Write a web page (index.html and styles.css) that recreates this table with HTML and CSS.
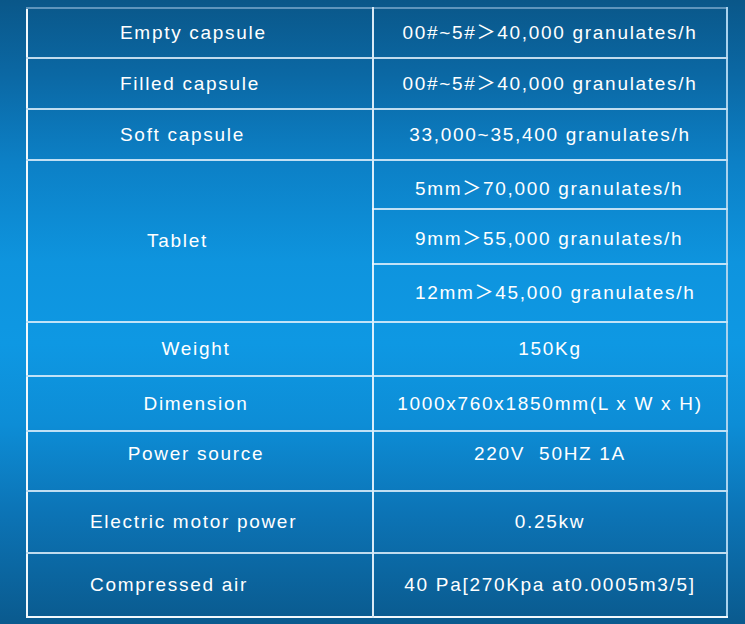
FILE: index.html
```html
<!DOCTYPE html>
<html>
<head>
<meta charset="utf-8">
<link rel="stylesheet" href="styles.css">
</head>
<body>
<table class="spec">
  <colgroup><col class="c1"><col class="c2"></colgroup>
  <tr class="r1"><td class="k lead">Empty capsule</td><td class="v">00#~5#＞40,000 granulates/h</td></tr>
  <tr class="r2"><td class="k lead">Filled capsule</td><td class="v">00#~5#＞40,000 granulates/h</td></tr>
  <tr class="r3"><td class="k lead">Soft capsule</td><td class="v">33,000~35,400 granulates/h</td></tr>
  <tr class="r4"><td class="k tablet" rowspan="3">Tablet</td><td class="v sub sub1">5mm＞70,000 granulates/h</td></tr>
  <tr class="r5"><td class="v sub sub2">9mm＞55,000 granulates/h</td></tr>
  <tr class="r6"><td class="v sub">12mm＞45,000 granulates/h</td></tr>
  <tr class="r7"><td class="k">Weight</td><td class="v">150Kg</td></tr>
  <tr class="r8"><td class="k">Dimension</td><td class="v">1000x760x1850mm(L x W x H)</td></tr>
  <tr class="r9"><td class="k up">Power source</td><td class="v up">220V&nbsp;&nbsp;50HZ 1A</td></tr>
  <tr class="r10"><td class="k left">Electric motor power</td><td class="v">0.25kw</td></tr>
  <tr class="r11"><td class="k left">Compressed air</td><td class="v">40 Pa[270Kpa at0.0005m3/5]</td></tr>
</table>
</body>
</html>
```

FILE: styles.css
```css
html, body {
  margin: 0;
  padding: 0;
}
body {
  width: 745px;
  height: 624px;
  overflow: hidden;
  background: linear-gradient(to bottom,
    #0a5789 0%,
    #0b68a4 12%,
    #0c80c6 26%,
    #0e94de 42%,
    #0e98e3 55%,
    #0d8dd6 68%,
    #0c74b6 82%,
    #0a5a8e 100%);
  font-family: "Liberation Sans", Arial, "Noto Sans CJK SC", sans-serif;
  color: #ffffff;
}
.spec {
  border-collapse: collapse;
  margin: 7px 0 0 26px;
  width: 700px;
  table-layout: fixed;
  border-top: 2px solid #5f95bc;
  border-left: 2px solid #f2f8fc;
  border-bottom: 2px solid #f2f8fc;
  border-right: 2px solid #a9d2ee;
}
.c1 { width: 346px; }
.c2 { width: 354px; }
.spec td {
  box-sizing: border-box;
  padding: 0;
  font-size: 19px;
  letter-spacing: 1.7px;
  line-height: 20px;
  vertical-align: middle;
  border-top: 2px solid rgba(225, 240, 252, 0.85);
  white-space: nowrap;
}
.spec td.k {
  border-right: 2px solid rgba(240, 248, 255, 0.9);
  text-align: center;
  padding-right: 8px;
}
.spec td.v {
  text-align: center;
}
.spec tr.r1 td { border-top: none; }

.r1 { height: 50px; }
.r2 { height: 51px; }
.r3 { height: 51px; }
.r4 { height: 49px; }
.r5 { height: 55px; }
.r6 { height: 58px; }
.r7 { height: 54px; }
.r8 { height: 55px; }
.r9 { height: 60px; }
.r10 { height: 62px; }
.r11 { height: 64px; }

.spec td.k.lead {
  text-align: left;
  padding-left: 92px;
}
.spec td.k.tablet {
  text-align: left;
  padding-left: 119px;
}
.spec td.v.sub {
  text-align: left;
  padding-left: 41px;
}
.spec td.v.sub1 { padding-top: 8px; }
.spec td.v.sub2 { padding-top: 5px; }
.spec td.up { padding-bottom: 14px; }
.spec td.k.left {
  text-align: left;
  padding-left: 62px;
}
```
